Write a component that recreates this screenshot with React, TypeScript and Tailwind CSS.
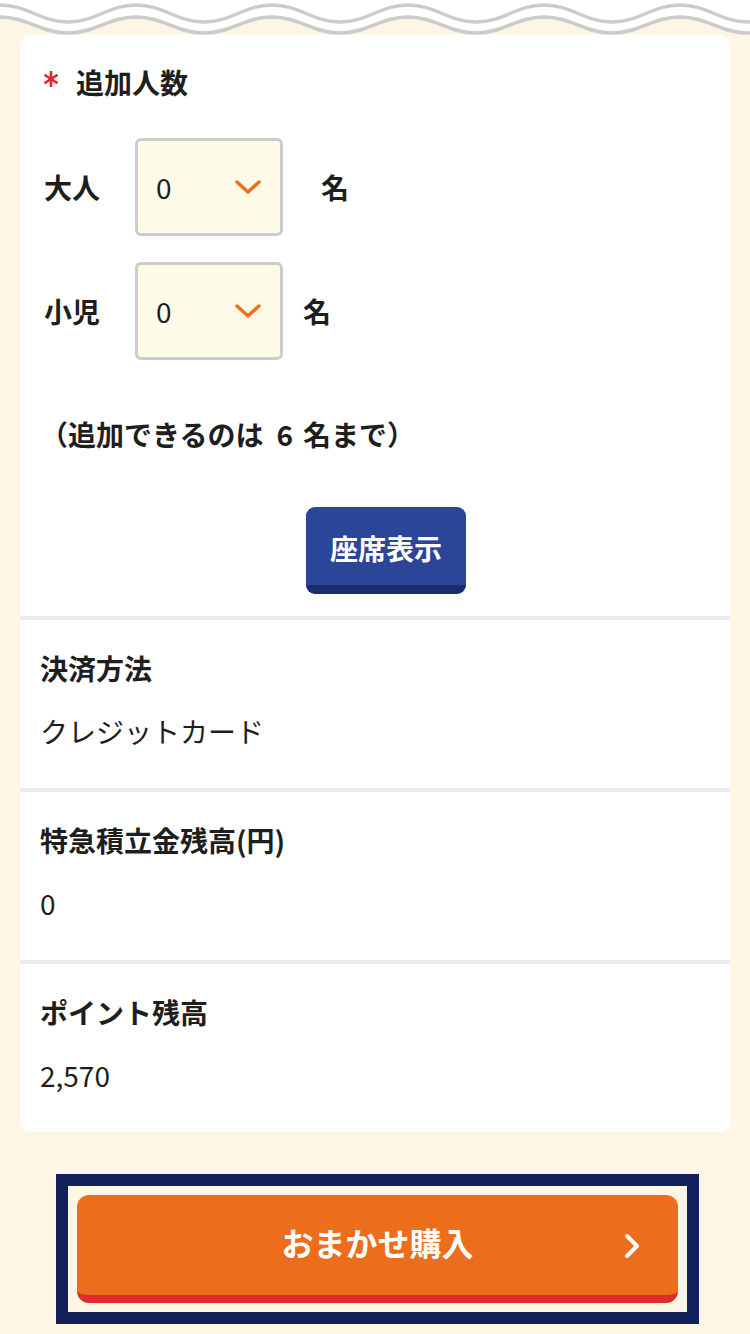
import React from 'react';

const FONT = { fontFamily: '"Noto Sans CJK JP", "Noto Sans", sans-serif' };

// build a wavy line path; crest at x=0
const wave = (crest: number, trough: number) => {
  const p = 136;
  const h = p / 2;
  let d = `M ${-p} ${crest}`;
  for (let x = -p; x < 900; x += p) {
    d += ` C ${x + h * 0.4} ${crest} ${x + h * 0.6} ${trough} ${x + h} ${trough}`;
    d += ` C ${x + h + h * 0.4} ${trough} ${x + h + h * 0.6} ${crest} ${x + p} ${crest}`;
  }
  return d;
};

const WaveTop: React.FC = () => {
  const line1 = wave(5, 22);
  const line2 = wave(17, 33);
  return (
    <svg width="750" height="35" viewBox="0 0 750 35" className="block">
      <path d={`${line2} L 1000 0 L -136 0 Z`} fill="#ffffff" />
      <path d={line1} fill="none" stroke="#cbcbcb" strokeWidth="3.5" />
      <path d={line2} fill="none" stroke="#cbcbcb" strokeWidth="3.5" />
    </svg>
  );
};

const Select: React.FC = () => (
  <div className="w-[148px] h-[98px] border-[3px] border-[#cccccc] rounded-[6px] bg-[#fffbe9] flex items-center justify-between pl-[18px] pr-[19px]">
    <span className="text-[28px] text-[#1e1e1e]">0</span>
    <svg width="26" height="14" viewBox="0 0 26 14">
      <polyline points="2,2 13,12 24,2" fill="none" stroke="#ee7120" strokeWidth="3.5" strokeLinecap="round" strokeLinejoin="round" />
    </svg>
  </div>
);

const InfoSection: React.FC<{ label: string; value: string }> = ({ label, value }) => (
  <div className="pt-[30px] pb-[39px] px-[20px] border-t-4 border-[#ebebeb]">
    <div className="text-[28px] font-bold leading-[36px] text-[#1e1e1e]">{label}</div>
    <div className="mt-[27px] text-[28px] leading-[36px] text-[#1e1e1e]">{value}</div>
  </div>
);

export default function App() {
  return (
    <div className="w-[750px] h-[1334px] bg-[#fdf6e4] overflow-hidden" style={FONT}>
      <WaveTop />
      <div className="mx-[20px] bg-white rounded-[10px] overflow-hidden">
        <div className="pt-[27px] pb-[22px] px-[24px]">
          <div className="flex items-center h-[40px]">
            <svg className="mr-[18px] -mt-[6px]" width="14" height="18" viewBox="0 0 14 18">
              <g stroke="#e3262b" strokeWidth="2.6" strokeLinecap="butt">
                <line x1="7" y1="1" x2="7" y2="17" />
                <line x1="0.5" y1="4.8" x2="13.5" y2="13.2" />
                <line x1="0.5" y1="13.2" x2="13.5" y2="4.8" />
              </g>
            </svg>
            <span className="text-[28px] font-bold text-[#1e1e1e]">追加人数</span>
          </div>

          <div className="mt-[36px] flex items-center">
            <span className="w-[91px] text-[28px] font-bold text-[#1e1e1e]">大人</span>
            <Select />
            <span className="ml-[38px] text-[28px] font-bold text-[#1e1e1e]">名</span>
          </div>
          <div className="mt-[26px] flex items-center">
            <span className="w-[91px] text-[28px] font-bold text-[#1e1e1e]">小児</span>
            <Select />
            <span className="ml-[20px] text-[28px] font-bold text-[#1e1e1e]">名</span>
          </div>

          <div className="mt-[54px] -ml-[4px] h-[40px] flex items-center text-[28px] font-bold text-[#1e1e1e]">
            <span>（追加できるのは</span>
            <span className="ml-[13px] mr-[10px]">6</span>
            <span>名まで）</span>
          </div>

          <div className="mt-[53px] flex justify-center pl-[22px]">
            <button className="w-[160px] h-[87px] rounded-[9px] bg-[#2b4599] border-b-[9px] border-[#1b2b6b] text-white text-[28px] font-bold flex items-center justify-center pt-[4px]">
              座席表示
            </button>
          </div>
        </div>

        <InfoSection label="決済方法" value="クレジットカード" />
        <InfoSection label="特急積立金残高(円)" value="0" />
        <InfoSection label="ポイント残高" value="2,570" />
      </div>

      <div className="mt-[42px] mx-[56px] w-[643px] border-[12px] border-[#13205b] p-[9px]">
        <button className="relative w-full h-[108px] rounded-[12px] bg-[#ec6d1b] border-b-[8px] border-[#dd2c2c] flex items-center justify-center text-white text-[32px] font-bold">
          <span className="-mt-[6px]">おまかせ購入</span>
          <svg className="absolute right-[38px] top-[38px]" width="16" height="26" viewBox="0 0 16 26">
            <polyline points="3,3 13,13 3,23" fill="none" stroke="#ffffff" strokeWidth="4" strokeLinecap="round" strokeLinejoin="round" />
          </svg>
        </button>
      </div>
    </div>
  );
}
